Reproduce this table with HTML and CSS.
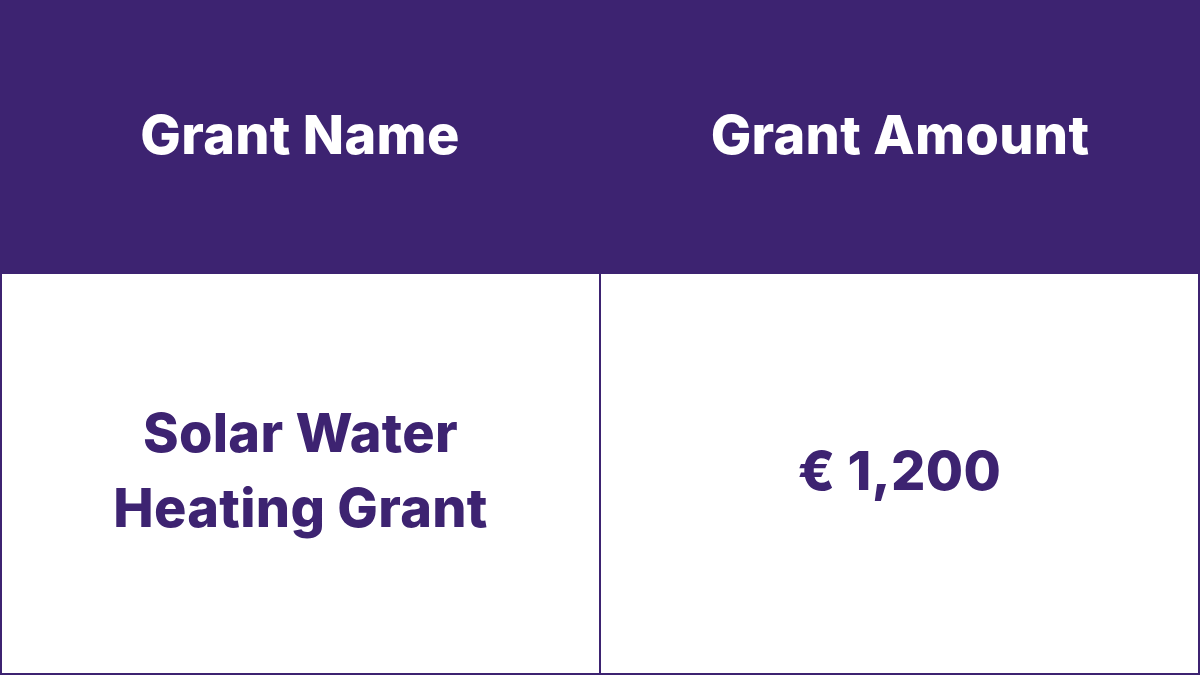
FILE: index.html
```html
<!DOCTYPE html>
<html>
<head>
<meta charset="utf-8">
<link rel="stylesheet" href="styles.css">
</head>
<body>
<div class="table">
  <div class="head cell">Grant Name</div>
  <div class="head cell">Grant Amount</div>
  <div class="body cell first">Solar Water<br>Heating Grant</div>
  <div class="body cell last">€ 1,200</div>
</div>
</body>
</html>
```
FILE: styles.css
```css
html, body { margin: 0; padding: 0; background: #fff; }
body { width: 1200px; height: 675px; overflow: hidden; font-family: Inter, "Noto Sans", sans-serif; }
.table {
  display: grid;
  grid-template-columns: 600px 600px;
  grid-template-rows: 274px 401px;
}
.cell {
  display: flex;
  align-items: center;
  justify-content: center;
  text-align: center;
  font-weight: 800;
  font-size: 54px;
  letter-spacing: 0.3px;
  box-sizing: border-box;
}
.head { background: #3d2371; color: #fff; padding-bottom: 6px; }
.body {
  color: #3d2371;
  line-height: 75px;
  border-bottom: 2px solid #3d2371;
  padding-bottom: 7px;
}
.first { border-left: 2px solid #3d2371; border-right: 1px solid #3d2371; }
.last { border-left: 1px solid #3d2371; border-right: 2px solid #3d2371; }
```
